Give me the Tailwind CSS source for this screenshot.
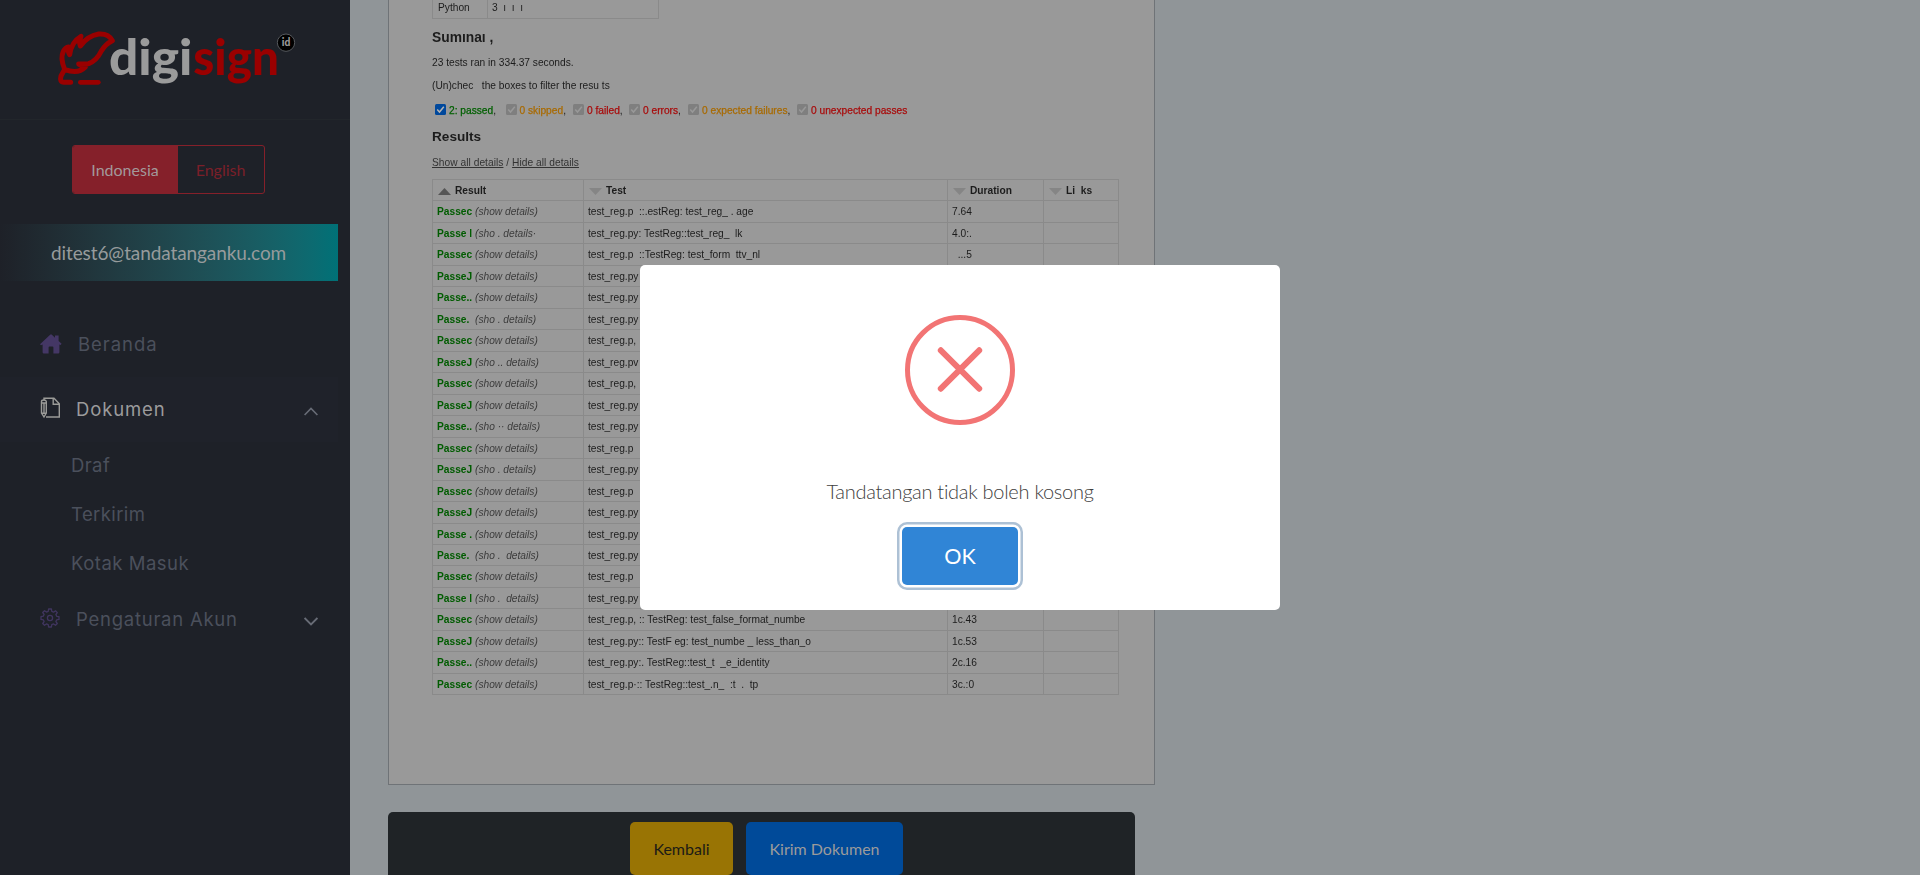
<!DOCTYPE html>
<html lang="id">
<head>
<meta charset="utf-8">
<title>Digisign</title>
<script src="https://cdn.jsdelivr.net/npm/@tailwindcss/browser@4"></script>
</head>
<body class="relative h-[875px] w-[1920px] overflow-hidden bg-[#909598] font-['Lato',sans-serif] [font-variant-ligatures:none]">
<div class="flex h-full">
  <aside class="flex h-full w-[350px] shrink-0 flex-col bg-[#1e2128]">
    <div class="flex h-[120px] shrink-0 items-start border-b border-[#22262b] pt-5 pl-[50px]">
      <svg class="h-20 w-[260px]" viewBox="0 0 780 240">
        <g fill="none" stroke="#9a0000" stroke-width="15" stroke-linecap="round" stroke-linejoin="round">
          <path d="M62 187H42Q28 187 33 168L44 148Q30 114 40 94Q46 82 56 81Q53 94 59 104Q64 66 93 49Q86 66 91 78Q112 48 146 42Q176 40 187 62Q166 72 154 93Q140 122 116 131L86 132Q96 138 106 141Q84 164 44 148"/>
          <path d="M91 187H145" stroke-width="14"/>
        </g>
        <g font-family="Lato" font-weight="900" font-size="146">
          <text x="177" y="164" textLength="250" lengthAdjust="spacingAndGlyphs" fill="#9b9b9b">digi</text>
          <text x="430" y="164" textLength="257" lengthAdjust="spacingAndGlyphs" fill="#9a0000">sign</text>
        </g>
        <circle cx="708" cy="68" r="26" fill="#000" stroke="#55585c" stroke-width="3"/>
        <text x="708" y="79" text-anchor="middle" font-family="Lato" font-weight="900" font-size="31" fill="#999">id</text>
      </svg>
    </div>
    <div class="mt-[25px] ml-[72px] flex h-[49px] w-[193px] shrink-0 overflow-hidden rounded-[3px] border border-[#85202a] text-[16px]">
      <div class="flex w-[105px] items-center justify-center bg-[#85202a] pr-px text-[#a3989a]">Indonesia</div>
      <div class="flex flex-1 items-center justify-center pr-px text-[#7b1f29]">English</div>
    </div>
    <div class="mt-[30px] flex h-[57px] w-[338px] shrink-0 items-center bg-linear-to-r from-[#1e2128] to-[#007177] pt-px pl-[51px] text-[19px] tracking-[-0.1px] text-[#969b9c]"><span class="whitespace-nowrap">ditest6@tandatanganku.com</span></div>

    <nav class="mt-8 w-[338px] font-['Inter',sans-serif] text-[18.5px] text-[#4b505c]">
      <div class="flex h-[64px] items-center pl-10">
        <svg class="mb-0.5 h-5 w-[22px]" viewBox="0 0 22 20" fill="#443765"><path d="M0 10.2 10.4.6Q11 .2 11.6.6L15 3.7V1.6H18.6V7L21.6 9.8 20.6 11 19.4 10.4V18.2Q19.4 19.4 18.2 19.4H13.4V13.4Q13.4 12.4 12.4 12.4H9.6Q8.6 12.4 8.6 13.4V19.4H3.8Q2.6 19.4 2.6 18.2V10.4L1 11.2Z"/></svg>
        <span class="ml-4 tracking-[0.95px]">Beranda</span>
      </div>
      <div class="flex h-[65px] items-center bg-[#1f222a] pl-10 text-[#9b9b9c]">
        <svg class="mb-1 h-[22px] w-[21px]" viewBox="0 0 21 22" fill="none" stroke="#9b9b98" stroke-width="1.4"><path d="M4 3.5V1.2H14L19.3 6.8V20H6M13.2 1.5V7.3H19"/><path d="M1.5 4.5Q1.5 3 3.8 3T6.3 4.5V16L4 20 1.5 16ZM1.5 6H6.3M4 6V16M1.5 16.2H6.3"/></svg>
        <span class="ml-[15px] tracking-[0.85px]">Dokumen</span>
        <svg class="mt-1 mr-5 ml-auto h-[9px] w-[14px]" viewBox="0 0 14 9" fill="none" stroke="#686c76" stroke-width="1.6"><path d="M.6 8 7 1.5 13.4 8"/></svg>
      </div>
      <div class="flex h-[48px] items-center pl-[71px] tracking-[0.4px]">Draf</div>
      <div class="flex h-[49px] items-center pl-[71px] tracking-[0.4px]">Terkirim</div>
      <div class="flex h-[49px] items-center pl-[71px] tracking-[0.5px]">Kotak Masuk</div>
      <div class="flex h-[63px] items-center pl-10">
        <svg class="mb-1 h-5 w-5" viewBox="0 0 20 20" fill="none" stroke="#40355f" stroke-width="1.3" stroke-linejoin="round"><path d="M8.6 1H11.4L11.8 3.4 13.6 4.2 15.5 2.8 17.3 4.6 15.9 6.5 16.7 8.3 19 8.6V11.4L16.7 11.8 15.9 13.6 17.3 15.5 15.5 17.3 13.6 15.9 11.8 16.7 11.4 19H8.6L8.2 16.7 6.4 15.9 4.5 17.3 2.7 15.5 4.1 13.6 3.3 11.8 1 11.4V8.6L3.3 8.2 4.1 6.4 2.7 4.5 4.5 2.7 6.4 4.1 8.2 3.3Z"/><circle cx="10" cy="10" r="2.6"/></svg>
        <span class="ml-4 tracking-[0.75px]">Pengaturan Akun</span>
        <svg class="mt-1 mr-5 ml-auto h-[9px] w-[14px]" viewBox="0 0 14 9" fill="none" stroke="#686c76" stroke-width="1.8"><path d="M.6 1 7 7.5 13.4 1"/></svg>
      </div>
    </nav>
  </aside>

  <main class="flex flex-1 flex-col pl-[38px]">
    <section class="h-[785px] w-[767px] shrink-0 overflow-hidden border border-t-0 border-[#6f7377] bg-[#999]">
      <div class="pl-[43px] font-['Liberation_Sans',sans-serif] text-[10.2px] text-[#1c1c1c] blur-[0.4px]">
        <div class="flex h-[19px] w-[227px] border border-t-0 border-[#8a8a8a] leading-[16px]">
          <div class="w-[55px] border-r border-[#8a8a8a] pl-[5px]">Python</div><div class="pl-1 whitespace-pre">3  ı  ı  ı</div>
        </div>
        <h2 class="mt-[6px] h-[26px] text-[13.8px] leading-[26px] font-bold">Sumınaı ,</h2>
        <p class="h-6 leading-6">23 tests ran in 334.37 seconds.</p>
        <p class="h-[22px] leading-[22px] whitespace-pre">(Un)chec   the boxes to filter the resu ts</p>
        <div id="filters" class="flex h-7 items-center pl-[3px]"></div>
        <h2 class="h-6 text-[13.6px] leading-6 font-bold">Results</h2>
        <p class="h-7 leading-[28px] tracking-[0.04px] text-[#333]"><span class="underline">Show all details</span> / <span class="underline">Hide all details</span></p>
        <div id="results" class="mt-[2px] w-[687px] border-t border-l border-[#8a8a8a]"></div>
      </div>
    </section>
    <footer class="mt-[27px] flex h-[63px] w-[747px] gap-[13px] rounded-t-[5px] bg-[#1f2326] pt-[10px] pl-[242px] text-[16px]">
      <div class="flex h-[53px] w-[103px] items-center justify-center rounded-[5px] bg-[#997404] text-[#1c1b16]"><span>Kembali</span></div>
      <div class="flex h-[53px] w-[157px] items-center justify-center rounded-[5px] bg-[#004a99] text-[#9b9b9b]"><span>Kirim Dokumen</span></div>
    </footer>
  </main>
</div>

<div class="absolute top-[265px] left-[640px] flex h-[345px] w-[640px] flex-col items-center rounded-[5px] bg-white pt-[50px]">
  <svg class="size-[110px] shrink-0" viewBox="0 0 110 110" fill="none" stroke="#f27474"><circle cx="55" cy="55" r="52.5" stroke-width="5"/><path stroke-linecap="round" stroke-width="6" d="M35.8 35.3 74.2 73.7M74.2 35.3 35.8 73.7"/></svg>
  <p class="mt-[51px] h-[30px] text-[20px] leading-[30px] font-light tracking-[-0.28px] whitespace-nowrap text-[#404040]">Tandatangan tidak boleh kosong</p>
  <button class="mt-[21px] h-[58px] w-[116px] rounded-[5px] bg-[#3085d6] text-[21.5px] text-white shadow-[0_0_0_2.5px_#fff,0_0_0_5px_#adc1d5]">OK</button>
</div>

<script>
const filters = [
  [70.5, '2: passed', 'text-[#006000]', 1], [67.5, '0 skipped', 'text-[#a86a00]'], [56, '0 failed', 'text-[#a80c0c]'],
  [59, '0 errors', 'text-[#a80c0c]'], [109, '0 expected failures', 'text-[#a86a00]'], [120, '0 unexpected passes', 'text-[#a80c0c]']
];
document.getElementById('filters').innerHTML = filters.map(([w, t, c, on], i) => `
  <div class="flex shrink-0 items-center whitespace-nowrap" style="width:${w}px">
    <svg class="mr-[3px] mb-[2px] size-[11px] shrink-0" viewBox="0 0 11 11"><rect width="11" height="11" rx="1.5" fill="${on ? '#00489c' : '#7f7f7f'}"/><path d="M2.2 5.6 4.5 8 8.8 2.8" fill="none" stroke="${on ? '#b5b5b5' : '#999'}" stroke-width="1.5"/></svg>
    <span class="${c} [-webkit-text-stroke:0.25px_currentColor]">${t}</span>${i < 5 ? '<span>,</span>' : ''}
  </div>`).join('');

const rows = [
  ['Passec', '(show details)', 'test_reg.p  ::.estReg: test_reg_ . age', '7.64'],
  ['Passe l', '(sho . details·', 'test_reg.py: TestReg::test_reg_  lk', '4.0:.'],
  ['Passec', '(show details)', 'test_reg.p  ::TestReg: test_form  ttv_nl', '  ...5'],
  ['PasseJ', '(show details)', 'test_reg.py', ''],
  ['Passe..', '(show details)', 'test_reg.py', ''],
  ['Passe.', '(sho . details)', 'test_reg.py', ''],
  ['Passec', '(show details)', 'test_reg.p,', ''],
  ['PasseJ', '(sho .. details)', 'test_reg.pv', ''],
  ['Passec', '(show details)', 'test_reg.p,', ''],
  ['PasseJ', '(show details)', 'test_reg.py', ''],
  ['Passe..', '(sho ·· details)', 'test_reg.py', ''],
  ['Passec', '(show details)', 'test_reg.p', ''],
  ['PasseJ', '(sho . details)', 'test_reg.py', ''],
  ['Passec', '(show details)', 'test_reg.p', ''],
  ['PasseJ', '(show details)', 'test_reg.py', ''],
  ['Passe .', '(show details)', 'test_reg.py', ''],
  ['Passe.', '(sho .  details)', 'test_reg.py', ''],
  ['Passec', '(show details)', 'test_reg.p', ''],
  ['Passe l', '(sho .  details)', 'test_reg.py', ''],
  ['Passec', '(show details)', 'test_reg.p, :: TestReg: test_false_format_numbe', '1c.43'],
  ['PasseJ', '(show details)', 'test_reg.py:: TestF eg: test_numbe _ less_than_o', '1c.53'],
  ['Passe..', '(show details)', 'test_reg.py:. TestReg::test_t  _e_identity', '2c.16'],
  ['Passec', '(show details)', 'test_reg.p·:: TestReg::test_.n_  :t  .  tp', '3c.:0']
];
const cell = 'shrink-0 border-r border-b border-[#8a8a8a] pl-1 whitespace-pre overflow-hidden';
const widths = [151, 364, 96, 74.5];
const arrow = up => `<svg class="mx-[1px] mt-[2px] h-[7px] w-[13px] shrink-0" viewBox="0 0 13 7"><path d="${up ? 'M0 7H13L6.5 0Z' : 'M0 0H13L6.5 7Z'}" fill="${up ? '#555' : '#858585'}"/></svg>`;
const line = cells => `<div class="flex h-[21.48px] leading-[21px]">${cells.map((c, i) => `<div class="${cell}" style="width:${widths[i]}px">${c}</div>`).join('')}</div>`;
const head = (t, up) => `<div class="flex h-full items-center gap-[3px] font-bold">${arrow(up)}${t}</div>`;
document.getElementById('results').innerHTML =
  line([head('Result', 1), head('Test'), head('Duration'), head('Li  ks')]) +
  rows.map(([r, d, t, n]) => line([`<div class="flex"><b class="w-[38px] shrink-0 text-[#005c00]">${r}</b><i class="text-[#3c3c3c]">${d}</i></div>`, t, n, ''])).join('');
</script>
</body>
</html>
